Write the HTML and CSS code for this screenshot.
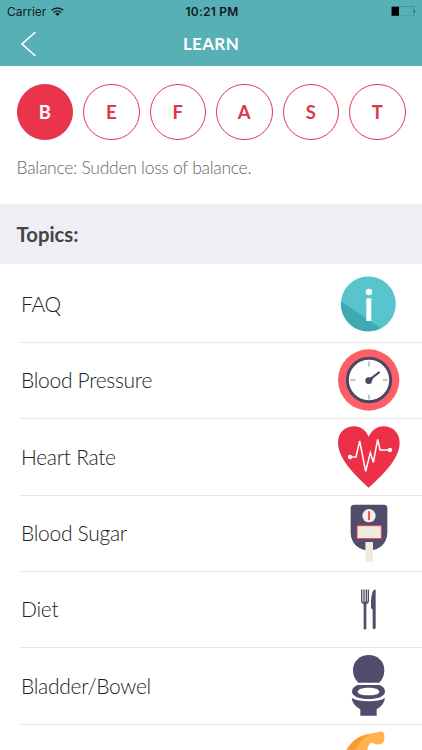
FILE: index.html
```
<!DOCTYPE html>
<html lang="en">
<head>
<meta charset="utf-8">
<title>Learn</title>
<link rel="stylesheet" href="styles.css">
</head>
<body>
<header class="header">
  <div class="status">
    <div class="carrier"><span class="carrier-name">Carrier</span>
      <svg class="wifi" viewBox="0 0 39 27"><g fill="none" stroke="#111b1c" stroke-width="4"><path d="M2 10Q19.500-4 37 10"/><path d="M8 16.500Q19.500 6.500 31 16.500"/></g><path d="M12.500 20Q19.500 14 26.500 20L19.500 27Z" fill="#111b1c"/></svg>
    </div>
    <div class="time">10:21 PM</div>
    <svg class="battery" viewBox="0 0 75 31"><rect x="1" y="1" width="67" height="29" rx="3" fill="none" stroke="#397f84" stroke-width="2"/><path d="M2 2H24V29H2Z" fill="#000"/><path d="M70 11Q75 15.500 70 20Z" fill="#101c1d"/></svg>
  </div>
  <nav class="nav">
    <svg class="back" viewBox="0 0 46 78"><path d="M43 3L3 39L43 75" fill="none" stroke="#fff" stroke-width="5"/></svg>
    <h1 class="title">LEARN</h1>
  </nav>
</header>
<main>
  <section class="befast">
    <div class="letters">
      <span class="letter active">B</span><span class="letter">E</span><span class="letter">F</span><span class="letter">A</span><span class="letter">S</span><span class="letter">T</span>
    </div>
    <p class="description">Balance: Sudden loss of balance.</p>
  </section>
  <h2 class="topics">Topics:</h2>
  <ul class="list">
    <li class="row"><span class="label">FAQ</span>
      <svg class="icon" viewBox="0 -6 240 229"><circle cx="115" cy="108" r="82.500" fill="#58c4cd"/><path d="M33 99L152 181A82.500 82.500 0 0 1 33 99Z" fill="#3fa9b3"/><circle cx="117" cy="72" r="9.500" fill="#fff"/><path d="M109 91H124V159H109Z" fill="#fff"/></svg></li>
    <li class="row"><span class="label">Blood Pressure</span>
      <svg class="icon" viewBox="0 -5 240 229"><circle cx="116" cy="109" r="92" fill="#fc6066"/><circle cx="117" cy="109" r="65" fill="#fff" stroke="#4b4665" stroke-width="9"/><path d="M117 54V69M117 153V167M61 109H76M159 109H173" stroke="#888" stroke-width="3"/><path d="M116 110L147 86" stroke="#4b4665" stroke-width="6" stroke-linecap="round"/><path d="M119 102L132 98L125 114Z" fill="#4b4665"/><circle cx="116" cy="111" r="10" fill="#4b4665"/></svg></li>
    <li class="row"><span class="label">Heart Rate</span>
      <svg class="icon" viewBox="0 -4 240 229"><path d="M116 202C85 172 24 120 24 67C24 37 45 18 72 18C94 18 108 31 116 49C125 31 139 18 161 18C188 18 209 38 209 67C209 120 148 172 116 202Z" fill="#ec3048"/><path d="M60 110H78L89 62L107 153L121 97L130 126L143 57L150 89H180" fill="none" stroke="#fff" stroke-width="4.500"/><circle cx="60" cy="110" r="6.500" fill="#fff"/><circle cx="180" cy="89" r="6.500" fill="#fff"/></svg></li>
    <li class="row"><span class="label">Blood Sugar</span>
      <svg class="icon" viewBox="0 -9 240 229"><path d="M72 20H162Q172 20 172 31V103C172 138 146 158 117 158S62 138 62 103V31Q62 20 72 20Z" fill="#504c6b"/><circle cx="117" cy="53" r="20" fill="#f2eee5"/><path d="M117 40V66" stroke="#ef5354" stroke-width="6"/><path d="M81 83H154V122H81Z" fill="#f0ebdc" stroke="#df4059" stroke-width="3"/><path d="M106 132H129V192H106Z" fill="#f0ebdc"/></svg></li>
    <li class="row"><span class="label">Diet</span>
      <svg class="icon" viewBox="0 -13.500 240 229"><g fill="none" stroke="#504c6b"><path d="M95 42V76Q95 84 105 84T115 76V42M102 42V80M109 42V80" stroke-width="4"/><path d="M105 82V158" stroke-width="8" stroke-linecap="round"/></g><path d="M137 42Q125 39 123 77V98Q128 99 128 104V158Q132 164 137 158Z" fill="#504c6b"/></svg></li>
    <li class="row"><span class="label">Bladder/Bowel</span>
      <svg class="icon" viewBox="0 0 240 229"><g fill="#504c6b"><path d="M85 104Q69 89 69 66C69 39 91 21 116 21S163 39 163 66Q163 89 148 104Z"/><path fill-rule="evenodd" d="M83 111H149Q165 117 165 131C165 145 143 153 116 153S66 145 66 131Q66 117 83 111ZM116 119C97 119 83 124 83 131S97 142 116 142S148 138 148 131S135 119 116 119Z"/><path d="M65 150Q83 160 116 160T165 150Q163 171 140 184V203H91V184Q67 171 65 150Z"/></g></svg></li>
    <li class="row partial"><span class="label"></span>
      <svg class="icon" viewBox="0 228.600 240 78"><path d="M50 306Q77 262 120 258L151 251Q164 252 163 265V279Q157 291 143 290L124 285Q115 289 112 306V330H50Z" fill="#ffb24d"/><path d="M50 306Q75 263 118 261Q91 275 76 306Z" fill="#f59c2f"/></svg></li>
  </ul>
</main>
</body>
</html>
```
FILE: styles.css
```
* { box-sizing: border-box; margin: 0; padding: 0; }
html, body { height: 750px; overflow: hidden; }
body { background: #fff; font-family: Lato, sans-serif; color: #333; }
.header { height: 65.500px; background: #58b0b7; }
.status { height: 22px; display: grid; grid-template-columns: 1fr auto 1fr; align-items: center; padding: 0 6px 0 7px; font-family: Inter, sans-serif; font-size: 12px; color: #111b1c; }
.carrier { display: flex; align-items: center; gap: 5px; }
.wifi { width: 13px; height: 9px; }
.time { font-weight: 600; letter-spacing: 0.250px; padding-left: 1px; }
.battery { width: 25px; height: 10.500px; justify-self: end; }
.nav { height: 43px; display: grid; grid-template-columns: 1fr auto 1fr; align-items: center; padding: 0 20.500px; }
.back { width: 15.500px; height: 26px; }
.title { font-size: 17px; line-height: 20px; font-weight: 700; letter-spacing: 0.350px; color: #fff; }
.befast { height: 138.500px; padding: 18px 16.500px 0; }
.letters { display: flex; justify-content: space-between; }
.letter { width: 56.500px; height: 56.500px; border: 1px solid #dc3750; border-radius: 50%; display: flex; align-items: center; justify-content: center; font-size: 18.500px; font-weight: 700; color: #dc3750; }
.letter.active { background: #e9344c; border-color: #e9344c; color: #fff; }
.description { margin-top: 17px; font-size: 17.500px; line-height: 22px; letter-spacing: -0.280px; font-weight: 300; color: #666; }
.topics { height: 59.500px; padding-left: 16.500px; background: #efeef4; font-size: 20.300px; line-height: 60px; font-weight: 700; color: #444; }
.list { list-style: none; padding-top: 3.200px; }
.row { height: 76.350px; margin-left: 20px; padding: 0 12px 0 1px; border-bottom: 1px solid #e9e9eb; display: flex; align-items: center; justify-content: space-between; }
.row.partial { height: 25px; border-bottom: 0; overflow: hidden; }
.label { font-size: 21px; line-height: 26px; letter-spacing: -0.300px; margin-top: -1px; font-weight: 300; color: #222; }
.icon { width: 80px; height: 76.350px; flex: none; align-self: flex-start; margin-top: -0.700px; }
.partial .icon { height: 26px; }
```
